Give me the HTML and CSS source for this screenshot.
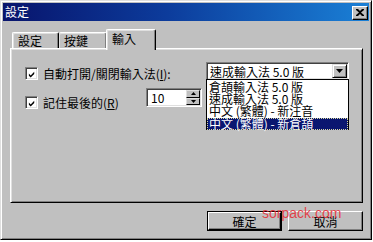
FILE: index.html
```html
<!DOCTYPE html>
<html lang="zh-Hant">
<head>
<meta charset="utf-8">
<title>設定</title>
<link rel="stylesheet" href="styles.css">
</head>
<body>
<div class="window">
  <div class="titlebar">
    <span class="title">設定</span>
    <span class="close"><svg width="8" height="7" viewBox="0 0 8 7"><path d="M0 0h2l2 2 2-2h2v1L5 3.5 8 6v1H6L4 5 2 7H0V6l3-2.5L0 1z" fill="#000"/></svg></span>
  </div>
  <div class="body">
    <div class="tabs">
      <div class="tab">設定</div>
      <div class="tab">按鍵</div>
      <div class="tab active">輸入</div>
    </div>
    <div class="panel">
      <div class="row row1">
        <div class="check">
          <span class="box"><svg width="9" height="9" viewBox="0 0 9 9"><path d="M1 3.5 L3 5.5 L7 1.5 L7 4 L3 8 L1 6 Z" fill="#000"/></svg></span>
          <span class="label">自動打開/關閉輸入法(<u>I</u>):</span>
        </div>
        <div class="combo">
          <span class="combo-text">速成輸入法 5.0 版</span>
          <span class="drop"><svg width="7" height="4" viewBox="0 0 7 4"><path d="M0 0h7L3.5 4z" fill="#000"/></svg></span>
          <div class="list">
            <div class="item">倉頡輸入法 5.0 版</div>
            <div class="item">速成輸入法 5.0 版</div>
            <div class="item">中文 (繁體) - 新注音</div>
            <div class="item selected">中文 (繁體) - 新倉頡</div>
          </div>
        </div>
      </div>
      <div class="row row2">
        <div class="check">
          <span class="box"><svg width="9" height="9" viewBox="0 0 9 9"><path d="M1 3.5 L3 5.5 L7 1.5 L7 4 L3 8 L1 6 Z" fill="#000"/></svg></span>
          <span class="label">記住最後的(<u>R</u>)</span>
        </div>
        <div class="spin">
          <span class="spin-text">10</span>
          <span class="spin-btns">
            <span class="sb"><svg width="5" height="3" viewBox="0 0 5 3"><path d="M2.5 0L5 3H0z" fill="#000"/></svg></span>
            <span class="sb"><svg width="5" height="3" viewBox="0 0 5 3"><path d="M0 0h5L2.5 3z" fill="#000"/></svg></span>
          </span>
        </div>
      </div>
    </div>
    <div class="buttons">
      <span class="btn default"><span class="btn-in">確定</span></span>
      <span class="btn"><span class="btn-in">取消</span></span>
    </div>
  </div>
  <div class="watermark">sorpack.com</div>
</div>
</body>
</html>
```

FILE: styles.css
```css
html, body {
  margin: 0;
  padding: 0;
  background: #ffffff;
}
body {
  font-family: "Noto Sans CJK TC", "Noto Sans", sans-serif;
  font-size: 12px;
  color: #000;
}
.window {
  position: relative;
  box-sizing: border-box;
  width: 372px;
  height: 240px;
  background: #c0c0c0;
  border: 1px solid;
  border-color: #dfdfdf #000 #000 #dfdfdf;
  box-shadow: inset 1px 1px #fff, inset -1px -1px #808080;
  padding: 2px;
  display: flex;
  flex-direction: column;
}
.titlebar {
  height: 18px;
  flex: none;
  display: flex;
  align-items: center;
  justify-content: space-between;
  padding-left: 2px;
  background: linear-gradient(to right, #08146c 0%, #0c3c9c 45%, #1a80d6 100%);
}
.title {
  color: #fff;
  font-size: 12px;
  line-height: 14px;
}
.close {
  box-sizing: border-box;
  width: 16px;
  height: 14px;
  margin-right: 1px;
  margin-top: 1px;
  background: #c0c0c0;
  border: 1px solid;
  border-color: #fff #000 #000 #fff;
  box-shadow: inset -1px -1px #808080;
  display: flex;
  align-items: center;
  justify-content: center;
  padding-bottom: 1px;
}
.body {
  flex: 1;
  padding: 8px 6px 0 7px;
  display: flex;
  flex-direction: column;
}
.tabs {
  height: 19px;
  display: flex;
  align-items: flex-end;
  padding-left: 2px;
  position: relative;
  z-index: 2;
}
.tab {
  box-sizing: border-box;
  height: 16px;
  padding: 1px 0 0 5px;
  line-height: 13px;
  background: #c0c0c0;
  border-top: 1px solid #fff;
  border-left: 1px solid #fff;
  border-right: 1px solid #000;
  box-shadow: inset -1px 0 #808080, inset 1px 1px #dfdfdf;
  border-radius: 2px 2px 0 0;
}
.tab:nth-child(1) { width: 47px; }
.tab:nth-child(2) { width: 48px; border-left: none; }
.tab.active {
  width: 50px;
  height: 21px;
  margin-bottom: -2px;
  margin-left: -1px;
  padding: 2px 0 0 5px;
  border-left: 1px solid #fff;
}
.panel {
  box-sizing: border-box;
  height: 155px;
  border: 1px solid;
  border-color: #fff #000 #000 #fff;
  box-shadow: inset 1px 1px #dfdfdf, inset -1px -1px #808080;
  padding: 13px 13px 0 14px;
  position: relative;
  z-index: 1;
}
.row {
  display: flex;
  align-items: flex-start;
}
.row1 { height: 18px; }
.row2 { margin-top: 8px; }
.check {
  display: flex;
  align-items: flex-start;
}
.row1 .check { width: 181px; margin-top: 5px; }
.row2 .check { width: 121px; margin-top: 8px; }
.box {
  box-sizing: border-box;
  width: 13px;
  height: 13px;
  flex: none;
  background: #fff;
  border: 1px solid;
  border-color: #808080 #fff #fff #808080;
  box-shadow: inset 1px 1px #404040, inset -1px -1px #dfdfdf;
  padding: 1px;
  display: flex;
}
.box svg { margin: 1px 0 0 1px; }
.label {
  margin-left: 5px;
  line-height: 13px;
  white-space: nowrap;
}
.label u { text-underline-offset: 1px; }
.combo {
  position: relative;
  box-sizing: border-box;
  width: 143px;
  height: 18px;
  background: #fff;
  border: 1px solid;
  border-color: #808080 #fff #fff #808080;
  box-shadow: inset 1px 1px #404040, inset -1px -1px #dfdfdf;
  padding: 2px 2px 2px 3px;
  display: flex;
  align-items: center;
  justify-content: space-between;
}
.combo-text {
  line-height: 13px;
  white-space: nowrap;
}
.drop {
  box-sizing: border-box;
  width: 15px;
  height: 14px;
  flex: none;
  margin-right: -1px;
  background: #c0c0c0;
  border: 1px solid;
  border-color: #dfdfdf #000 #000 #dfdfdf;
  box-shadow: inset 1px 1px #fff, inset -1px -1px #808080;
  display: flex;
  align-items: center;
  justify-content: center;
}
.list {
  position: absolute;
  top: 16px;
  left: -1px;
  box-sizing: border-box;
  width: 143px;
  height: 51px;
  background: #fff;
  border: 1px solid #000;
  padding-top: 1px;
  z-index: 5;
}
.item {
  height: 12px;
  line-height: 12px;
  padding-left: 2px;
  white-space: nowrap;
}
.item.selected {
  margin-top: 1px;
  height: 12px;
  background: #0a1670;
  color: #fff;
  outline: 1px dotted #d8d8a0;
  outline-offset: -1px;
}
.spin {
  box-sizing: border-box;
  width: 56px;
  height: 19px;
  background: #fff;
  border: 1px solid;
  border-color: #808080 #fff #fff #808080;
  box-shadow: inset 1px 1px #404040, inset -1px -1px #dfdfdf;
  padding: 2px 1px 2px 4px;
  display: flex;
  align-items: center;
  justify-content: space-between;
}
.spin-text { line-height: 13px; }
.spin-btns {
  display: flex;
  flex-direction: column;
  width: 14px;
  height: 15px;
}
.sb {
  flex: 1;
  box-sizing: border-box;
  background: #c0c0c0;
  border: 1px solid;
  border-color: #dfdfdf #000 #000 #dfdfdf;
  display: flex;
  align-items: center;
  justify-content: center;
}
.buttons {
  margin-top: 8px;
  display: flex;
  justify-content: flex-end;
  gap: 6px;
}
.btn {
  box-sizing: border-box;
  width: 75px;
  height: 20px;
  background: #c0c0c0;
  border: 1px solid;
  border-color: #fff #000 #000 #fff;
  box-shadow: inset -1px -1px #808080;
  display: flex;
}
.btn.default {
  border: 1px solid #000;
  box-shadow: none;
}
.btn-in {
  flex: 1;
  display: flex;
  align-items: center;
  justify-content: center;
  line-height: 13px;
}
.btn.default .btn-in {
  border: 1px solid;
  border-color: #fff #000 #000 #fff;
  box-shadow: inset -1px -1px #808080;
}
.watermark {
  position: absolute;
  left: 261px;
  top: 204px;
  font-family: "Liberation Sans", Arial, sans-serif;
  font-size: 14px;
  line-height: 16px;
  color: rgba(232, 40, 48, 0.85);
  z-index: 10;
  pointer-events: none;
}
```
